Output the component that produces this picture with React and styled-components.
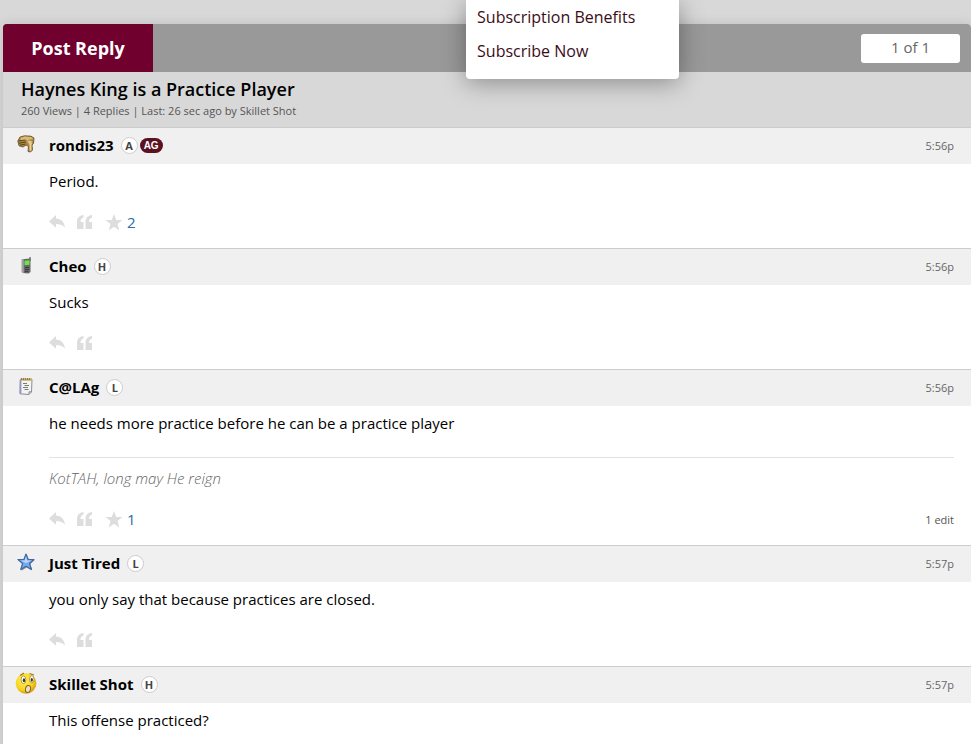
import React from 'react';
import styled, { createGlobalStyle } from 'styled-components';

const posts = [
  { id: 1, author: 'rondis23', icon: 'thumb', badge: 'A', ag: true, time: '5:56p', text: 'Period.', stars: 2 },
  { id: 2, author: 'Cheo', icon: 'phone', badge: 'H', time: '5:56p', text: 'Sucks' },
  {
    id: 3,
    author: 'C@LAg',
    icon: 'note',
    badge: 'L',
    time: '5:56p',
    text: 'he needs more practice before he can be a practice player',
    signature: 'KotTAH, long may He reign',
    stars: 1,
    edits: '1 edit',
  },
  { id: 4, author: 'Just Tired', icon: 'star', badge: 'L', time: '5:57p', text: 'you only say that because practices are closed.' },
  { id: 5, author: 'Skillet Shot', icon: 'face', badge: 'H', time: '5:57p', text: 'This offense practiced?' },
];

const PostIcon = ({ type }) => {
  switch (type) {
    case 'thumb':
      return (
        <svg width="18" height="18" viewBox="0 0 18 18" aria-hidden="true">
          <path d="M.8 6 3 2 7.500.8 14 1.200 17 3 16.500 8.500 15 10 15.500 15 13.500 17 11 16.500 11.500 11.500 9 10 6 12 2 10.800z" fill="#b08b45" stroke="#5d4a26" strokeWidth=".8" />
          <path d="M3.500 2.800 8 1.500l6.500.8 1.500 1.500-5 1.200-7 .2z" fill="#d9bb78" />
          <path d="M1.500 6 8.500 5M2 8.200 9 7M3 10.200 8.500 9" stroke="#59431c" strokeWidth="1" />
          <path d="M10 5.500 14.500 6 15 9 12.500 9.500z" fill="#e6cb8c" />
          <path d="M13.500 9v6.500" stroke="#efd698" strokeWidth="1.800" />
        </svg>
      );
    case 'phone':
      return (
        <svg width="18" height="18" viewBox="0 0 18 18" aria-hidden="true">
          <path d="M13 1v4" stroke="#777" strokeWidth="1.500" />
          <path d="M5 3.200 13.500 2.500 13.500 16 11.500 17.500 5.500 17z" fill="#666" />
          <path d="M4.500 3.500 6.800 3 6.800 17.300 4.500 16z" fill="#a2a2a2" />
          <path d="M7.500 4.800 12.500 4.300v4.500l-5 .5z" fill="#69e645" />
          <path d="M8 11.500h4M8 13.500h4M8 15.500h3" stroke="#3a3a3a" strokeWidth="1" />
        </svg>
      );
    case 'note':
      return (
        <svg width="18" height="18" viewBox="0 0 18 18" aria-hidden="true">
          <path d="M3.500 2.500h11.500L14.500 15 12 17.500 3 16.800z" fill="#f4f4ee" stroke="#8a8d9a" />
          <path d="M3.500 3v13.500" stroke="#9494cc" strokeWidth="1.800" />
          <path d="M3.500 2.500h11.500" stroke="#c5aa69" strokeWidth="2.400" />
          <path d="M4.500 1v2M6.500 1v2M8.500 1v2M10.500 1v2M12.500 1v2" stroke="#78633b" strokeWidth=".7" />
          <path d="M6 6.500h4M7.500 8.500h4.500M6 10.500h5M7.500 12.500h4" stroke="#777b80" />
          <path d="M12 17.300v-2.500h2.300" fill="#c6c8cc" stroke="#8a8d9a" />
        </svg>
      );
    case 'star':
      return (
        <svg width="18" height="18" viewBox="0 0 18 18" aria-hidden="true">
          <path d="M10 2.200 12 7l5.500.3-4.200 3.600 2 6.500L9.800 14.500 4.500 17.700l1.500-6z" fill="#999" />
          <path d="M9 1 11 6.300l6 .2-4.500 4 1.900 6L9 13.200l-5.200 3.300 1.800-6L1 6.500 7 6.300z" fill="#78abe9" stroke="#3f67a5" strokeWidth="1.200" strokeLinejoin="round" />
          <path d="M9 3.200 10.200 7.500 14.500 7.700 9 10 4 7.700 7.800 7.500z" fill="#b8d6fa" />
        </svg>
      );
    default:
      return (
        <svg width="22" height="22" viewBox="0 0 22 22" aria-hidden="true">
          <defs>
            <radialGradient id="faceFill" cx=".4" cy=".35" r=".65">
              <stop offset="0" stopColor="#fff35d" />
              <stop offset=".7" stopColor="#f8d21e" />
              <stop offset="1" stopColor="#d69c12" />
            </radialGradient>
          </defs>
          <circle cx="11" cy="11.500" r="10.300" fill="url(#faceFill)" />
          <path d="M5 3.500 9 1M14.500 1.500 19 3" stroke="#9d7613" strokeWidth="1.200" />
          <ellipse cx="8.500" cy="7.800" rx="2.400" ry="3.800" fill="#fff" stroke="#927629" strokeWidth=".7" />
          <ellipse cx="16.800" cy="7.300" rx="2.200" ry="3.600" fill="#fff" stroke="#927629" strokeWidth=".7" />
          <ellipse cx="9" cy="8.300" rx="1.200" ry="2" fill="#49320d" />
          <ellipse cx="16.800" cy="7.800" rx="1.100" ry="1.900" fill="#49320d" />
          <ellipse cx="13" cy="17" rx="2.500" ry="3.500" fill="#e5dfc8" stroke="#8d6415" strokeWidth="1" transform="rotate(12 13 17)" />
        </svg>
      );
  }
};

const ReplyIcon = () => (
  <svg width="16" height="14" viewBox="0 0 16 14" fill="currentColor" aria-hidden="true">
    <path d="M0 6.500 7 0v3.500c5 .3 8.500 3.500 9 9.500-2-3-4.500-4-9-4v3.800z" />
  </svg>
);

const QuoteIcon = () => (
  <svg width="16" height="14" viewBox="0 0 16 14" fill="currentColor" aria-hidden="true">
    <path d="M6.500 0v2.500C4.500 3.200 3.500 4.500 3.500 7H6.500v7H0V7C0 3 2.300.6 6.500 0zM15 0v2.500C13 3.200 12 4.500 12 7h3v7H8.500V7C8.500 3 10.800.6 15 0z" />
  </svg>
);

const StarIcon = () => (
  <svg width="18" height="17" viewBox="0 0 18 17" fill="currentColor" aria-hidden="true">
    <path d="M9 0 11.200 6H17.500L12.500 10 14.300 16.500 9 12.700 3.700 16.500 5.500 10 .5 6H6.800z" />
  </svg>
);

const Post = ({ post }) => (
  <article>
    <PostHeader>
      <IconSlot>
        <PostIcon type={post.icon} />
      </IconSlot>
      <Author href="#">{post.author}</Author>
      <Badge>{post.badge}</Badge>
      {post.ag && <AgBadge>AG</AgBadge>}
      <Time>{post.time}</Time>
    </PostHeader>
    <PostBody>
      <Message>{post.text}</Message>
      {post.signature && <Signature>{post.signature}</Signature>}
      <Actions>
        <ActionButton aria-label="Reply"><ReplyIcon /></ActionButton>
        <ActionButton aria-label="Quote"><QuoteIcon /></ActionButton>
        {post.stars && (
          <StarGroup>
            <ActionButton aria-label="Star"><StarIcon /></ActionButton>
            <StarCount href="#">{post.stars}</StarCount>
          </StarGroup>
        )}
        {post.edits && <Edits>{post.edits}</Edits>}
      </Actions>
    </PostBody>
  </article>
);

const App = () => (
  <>
    <GlobalStyle />
    <Page>
      <Menu>
        <MenuLink href="#">Subscription Benefits</MenuLink>
        <MenuLink href="#">Subscribe Now</MenuLink>
      </Menu>
      <Thread>
        <Toolbar>
          <ReplyButton>Post Reply</ReplyButton>
          <PageButton>1 of 1</PageButton>
        </Toolbar>
        <TitleBlock>
          <Title>Haynes King is a Practice Player</Title>
          <Meta>260 Views | 4 Replies | Last: 26 sec ago by Skillet Shot</Meta>
        </TitleBlock>
        {posts.map((post) => (
          <Post key={post.id} post={post} />
        ))}
      </Thread>
    </Page>
  </>
);

const GlobalStyle = createGlobalStyle`
  * {
    box-sizing: border-box;
  }

  html {
    scrollbar-width: none;
  }

  body {
    margin: 0;
    background: #d8d8d8;
    color: #000;
    font-family: 'Open Sans', sans-serif;
    font-size: 15px;
  }

  button {
    border: none;
    padding: 0;
    font-family: inherit;
    cursor: pointer;
  }

  a {
    text-decoration: none;
  }
`;

const Page = styled.div`
  position: relative;
  padding: 24px 0 0 3px;
`;

const Menu = styled.nav`
  position: absolute;
  top: 0;
  left: 48%;
  z-index: 2;
  display: flex;
  flex-direction: column;
  width: 213px;
  padding: 0 11px 11px;
  background: #fff;
  border-radius: 0 0 4px 4px;
  box-shadow: 0 4px 24px rgba(0, 0, 0, 0.35);
`;

const MenuLink = styled.a`
  font-size: 16px;
  line-height: 34px;
  font-weight: 500;
  white-space: nowrap;
  color: #3c0d19;
`;

const Thread = styled.main`
  background: #fff;
  border-radius: 4px 4px 0 0;
  box-shadow: 0 0 12px rgba(0, 0, 0, 0.12);
`;

const Toolbar = styled.div`
  display: flex;
  align-items: center;
  justify-content: space-between;
  height: 48px;
  padding-right: 11px;
  background: #999;
  border-radius: 4px 4px 0 0;
`;

const ReplyButton = styled.button`
  width: 150px;
  height: 48px;
  background: #70002e;
  border-radius: 4px 0 0 0;
  color: #fff;
  font-size: 18px;
  font-weight: 700;
`;

const PageButton = styled.button`
  width: 99px;
  height: 29px;
  padding-bottom: 2px;
  background: #fff;
  border-radius: 3px;
  color: #666;
  font-size: 15px;
  font-weight: 500;
`;

const TitleBlock = styled.header`
  padding: 6px 18px 8px;
  background: #d8d8d8;
`;

const Title = styled.h1`
  margin: 0 0 2px;
  font-size: 18px;
  font-weight: 600;
  line-height: 22px;
`;

const Meta = styled.div`
  font-size: 11px;
  line-height: 17px;
  color: #555;
`;

const PostHeader = styled.header`
  display: flex;
  align-items: center;
  height: 37px;
  padding: 0 17px 2px 0;
  background: #f0f0f0;
  border-top: 1px solid #ccc;
`;

const IconSlot = styled.span`
  display: flex;
  justify-content: center;
  width: 46px;
  padding-bottom: 2px;
`;

const Author = styled.a`
  margin-right: 7px;
  color: #000;
  font-weight: 700;
`;

const Badge = styled.span`
  display: flex;
  align-items: center;
  justify-content: center;
  width: 17px;
  height: 17px;
  background: #fff;
  border: 1px solid #ccc;
  border-radius: 50%;
  color: #444;
  font-size: 11px;
  font-weight: 700;
`;

const AgBadge = styled.span`
  margin-left: 2px;
  padding: 0 4px;
  background: #5a1220;
  border-radius: 8px;
  color: #fff;
  font-family: 'Liberation Sans', sans-serif;
  font-size: 10px;
  font-weight: 700;
  line-height: 15px;
`;

const Time = styled.time`
  margin-left: auto;
  font-size: 11px;
  color: #666;
`;

const PostBody = styled.div`
  padding: 6px 17px 14px 46px;
`;

const Message = styled.p`
  margin: 0;
  line-height: 22px;
`;

const Signature = styled.p`
  margin: 23px 0 0;
  padding-top: 9px;
  border-top: 1px solid #e2e2e2;
  color: #666;
  font-style: italic;
  font-weight: 300;
  line-height: 22px;
`;

const Actions = styled.div`
  display: flex;
  align-items: center;
  gap: 12px;
  height: 24px;
  margin-top: 18px;
`;

const ActionButton = styled.button`
  display: flex;
  background: none;
  color: #ddd;
`;

const StarGroup = styled.div`
  display: flex;
  align-items: center;
  gap: 4px;
`;

const StarCount = styled.a`
  color: #2a6ca4;
`;

const Edits = styled.span`
  margin-left: auto;
  font-size: 11px;
  color: #555;
`;

export default App;
